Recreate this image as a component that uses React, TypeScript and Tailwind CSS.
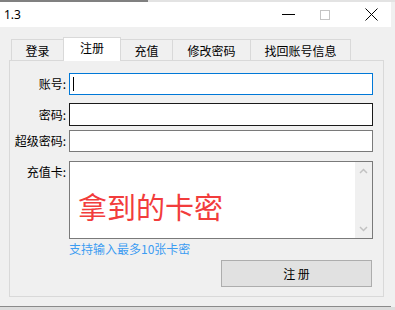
import React from "react";

const font = { fontFamily: '"Noto Sans CJK SC", "Noto Sans", sans-serif' };

function Tab({ label, w, selected }: { label: string; w: string; selected?: boolean }) {
  if (selected) {
    return (
      <div
        className={`${w} h-[24px] -mb-[1px] bg-white border border-b-0 border-[#d9d9d9] flex items-center justify-center text-[12px] leading-none text-black relative z-10 -ml-[1px]`}
      >
        <span className="-mt-[3px]">{label}</span>
      </div>
    );
  }
  return (
    <div
      className={`${w} h-[21px] mt-[2px] bg-[#f0f0f0] border border-b-0 border-[#d9d9d9] flex items-center justify-center text-[12px] leading-none text-black -ml-[1px] first:ml-0`}
    >
      <span className="mt-[2px]">{label}</span>
    </div>
  );
}

export default function App() {
  return (
    <div className="w-[395px] h-[310px] bg-[#f0f0f0] overflow-hidden flex flex-col" style={font}>
      <div className="h-[2px] flex">
        <div className="w-[148px] bg-[#808080]" />
        <div className="flex-1 bg-[#e3e3e3]" />
      </div>
      <div className="w-[391px] flex-1 flex flex-col">
        {/* title bar */}
        <div className="h-[25px] bg-white flex items-center relative">
          <span className="ml-[4px] text-[12px] text-black" style={{ fontFamily: '"Noto Sans", sans-serif' }}>
            1.3
          </span>
          <div className="ml-auto flex items-center h-full">
            <div className="w-[13px] h-[1px] bg-black mr-[25px]" />
            <div className="w-[10px] h-[10px] border border-[#c4c4c4] mr-[35px]" />
            <svg width="13" height="13" viewBox="0 0 13 13" className="mr-[13px]">
              <path d="M0.5 0.5 L12.5 12.5 M12.5 0.5 L0.5 12.5" stroke="#000" strokeWidth="1" />
            </svg>
          </div>
        </div>
        {/* body */}
        <div className="flex-1 bg-[#f0f0f0] flex flex-col">
          <div className="flex items-end ml-[11px] mt-[10px] h-[23px]">
            <Tab label="登录" w="w-[53px]" />
            <Tab label="注册" w="w-[58px]" selected />
            <Tab label="充值" w="w-[53px]" />
            <Tab label="修改密码" w="w-[79px]" />
            <Tab label="找回账号信息" w="w-[101px]" />
          </div>
          <div className="ml-[9px] w-[375px] h-[237px] border border-[#d9d9d9] bg-[#f0f0f0] flex flex-col text-[12px] text-black">
            <div className="flex items-center mt-[12px] h-[22px]">
              <div className="w-[56px] text-right leading-none">账号:</div>
              <div className="ml-[3px] w-[304px] h-[22px] bg-white border border-[#0078d7] flex items-center">
                <div className="ml-[3px] w-[1px] h-[14px] bg-black" />
              </div>
            </div>
            <div className="flex items-center mt-[8px] h-[23px]">
              <div className="w-[56px] text-right leading-none">密码:</div>
              <div className="ml-[3px] w-[304px] h-[23px] bg-white border border-[#1a1a1a]" />
            </div>
            <div className="flex items-center mt-[4px] h-[22px]">
              <div className="w-[56px] text-right leading-none">超级密码:</div>
              <div className="ml-[3px] w-[304px] h-[22px] bg-white border border-[#7a7a7a]" />
            </div>
            <div className="flex items-start mt-[9px] h-[78px]">
              <div className="w-[56px] text-right leading-none pt-[5px]">充值卡:</div>
              <div className="ml-[3px] w-[304px] h-[78px] bg-white border border-[#7a7a7a] flex">
                <div className="flex-1 pl-[8px] pt-[30px] text-[29px] leading-[29px] text-[#f23c3c] whitespace-nowrap">
                  拿到的卡密
                </div>
                <div className="w-[17px] h-full bg-[#f0f0f0] flex flex-col items-center justify-between py-[6px]">
                  <svg width="9" height="6" viewBox="0 0 9 6">
                    <path d="M1 5 L4.5 1.5 L8 5" stroke="#c2c2c2" strokeWidth="1.5" fill="none" />
                  </svg>
                  <svg width="9" height="6" viewBox="0 0 9 6">
                    <path d="M1 1 L4.5 4.5 L8 1" stroke="#c2c2c2" strokeWidth="1.5" fill="none" />
                  </svg>
                </div>
              </div>
            </div>
            <div className="mt-[3px] h-[14px] ml-[59px] text-[12px] leading-[14px] text-[#3c9cf2]">
              支持输入最多10张卡密
            </div>
            <div className="mt-[4px] ml-[211px] w-[151px] h-[27px] bg-[#e1e1e1] border border-[#adadad] flex items-center justify-center text-[12px] leading-none">
              注&nbsp;册
            </div>
          </div>
          <div className="flex-1" />
        </div>
        <div className="h-[1px] bg-[#8a8a8a]" />
      </div>
      <div className="h-[3px] bg-[#dcdcdc]" />
    </div>
  );
}
